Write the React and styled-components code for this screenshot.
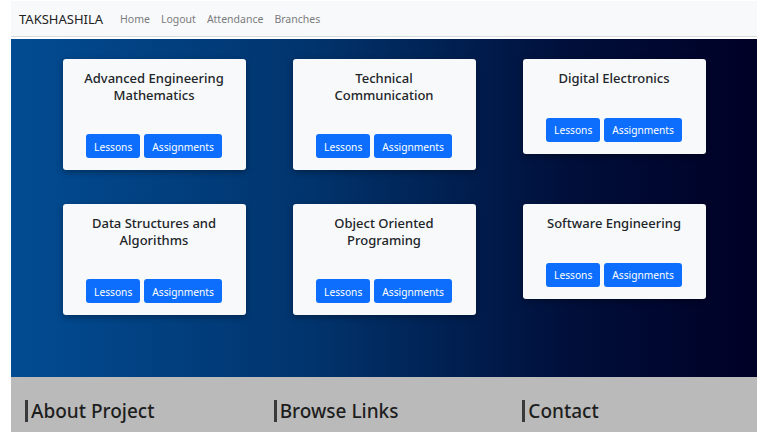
import styled, { createGlobalStyle } from "styled-components";

const GlobalStyle = createGlobalStyle`
  body {
    margin: 0;
    background: #ffffff;
    font-family: "Noto Sans", "Open Sans", sans-serif;
  }
`;

const subjects = [
  "Advanced Engineering Mathematics",
  "Technical Communication",
  "Digital Electronics",
  "Data Structures and Algorithms",
  "Object Oriented Programing",
  "Software Engineering",
];

const wrapTitles = {
  "Advanced Engineering Mathematics": ["Advanced Engineering", "Mathematics"],
  "Technical Communication": ["Technical", "Communication"],
  "Data Structures and Algorithms": ["Data Structures and", "Algorithms"],
  "Object Oriented Programing": ["Object Oriented", "Programing"],
};

const App = () => {
  return (
    <Page>
      <GlobalStyle />
      <Navbar>
        <Brand>TAKSHASHILA</Brand>
        <NavLinks>
          <NavLink>Home</NavLink>
          <NavLink>Logout</NavLink>
          <NavLink>Attendance</NavLink>
          <NavLink>Branches</NavLink>
        </NavLinks>
      </Navbar>
      <Hero>
        <CardGrid>
          {subjects.map((s) => (
            <Card key={s}>
              <CardTitle>
                {(wrapTitles[s] || [s]).map((line) => (
                  <TitleLine key={line}>{line}</TitleLine>
                ))}
              </CardTitle>
              <ButtonRow>
                <Button>Lessons</Button>
                <Button>Assignments</Button>
              </ButtonRow>
            </Card>
          ))}
        </CardGrid>
      </Hero>
      <Footer>
        <FooterCol>
          <FooterHeading>About Project</FooterHeading>
        </FooterCol>
        <FooterCol>
          <FooterHeading>Browse Links</FooterHeading>
        </FooterCol>
        <FooterCol>
          <FooterHeading>Contact</FooterHeading>
        </FooterCol>
      </Footer>
    </Page>
  );
};

export default App;

const Page = styled.div`
  padding: 1px 11px 0 11px;
  height: 431px;
  overflow: hidden;
  display: flex;
  flex-direction: column;
`;

const Navbar = styled.nav`
  height: 36px;
  background: #f8f9fa;
  border-bottom: 1px solid #d8dadc;
  display: flex;
  align-items: center;
  padding: 1px 8px 0;
  box-sizing: border-box;
  flex-shrink: 0;
`;

const Brand = styled.span`
  font-size: 13px;
  color: #222;
  margin-right: 17px;
`;

const NavLinks = styled.div`
  display: flex;
  gap: 11px;
`;

const NavLink = styled.span`
  font-size: 10.5px;
  color: #7a7c7e;
`;

const Hero = styled.section`
  margin-top: 2px;
  height: 338px;
  flex-shrink: 0;
  background: linear-gradient(90deg, #024c93 0%, #01346d 40%, #000f3a 75%, #000026 100%);
  padding-top: 20px;
  box-sizing: border-box;
`;

const CardGrid = styled.div`
  display: grid;
  grid-template-columns: repeat(3, 183px);
  column-gap: 47px;
  row-gap: 34px;
  justify-content: center;
  align-items: start;
`;

const Card = styled.div`
  background: #f8f9fa;
  border-radius: 3px;
  box-shadow: 0 2px 6px rgba(0, 0, 0, 0.35);
  padding: 11px 8px 12px;
  display: flex;
  flex-direction: column;
  align-items: center;
`;

const CardTitle = styled.h3`
  margin: 0;
  font-size: 13px;
  font-weight: 500;
  color: #212529;
  text-align: center;
  display: flex;
  flex-direction: column;
`;

const TitleLine = styled.span`
  display: block;
  line-height: 16.5px;
`;

const ButtonRow = styled.div`
  display: flex;
  gap: 4px;
  margin-top: 31px;
`;

const Button = styled.button`
  background: #0d6efd;
  color: #fff;
  border: none;
  border-radius: 3px;
  height: 24px;
  padding: 1px 8px 0;
  font-family: "Noto Sans", sans-serif;
  font-size: 10.2px;
`;

const Footer = styled.footer`
  flex: 1;
  background: #bababa;
  display: grid;
  grid-template-columns: repeat(3, 1fr);
  padding-top: 23px;
`;

const FooterCol = styled.div`
  padding-left: 14px;
`;

const FooterHeading = styled.h4`
  display: inline-block;
  margin: 0;
  font-size: 19px;
  font-weight: 500;
  line-height: 22px;
  color: #1e1e1e;
  border-left: 3px solid #3a3a3a;
  padding-left: 3px;
`;
